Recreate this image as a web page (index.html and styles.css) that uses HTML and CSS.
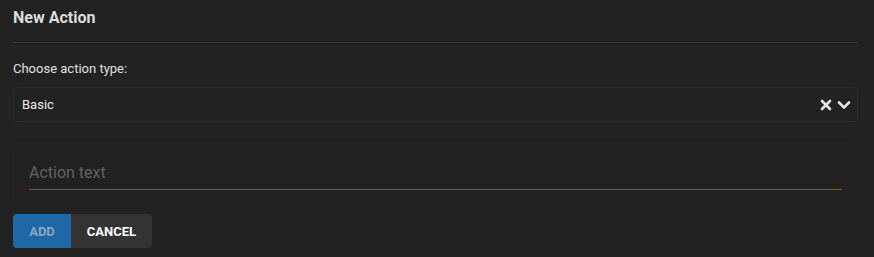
FILE: index.html
```html
<!DOCTYPE html>
<html>
<head>
<meta charset="utf-8">
<link rel="stylesheet" href="styles.css">
</head>
<body>
<div class="dialog">
  <div class="header"><h2 class="title">New Action</h2></div>
  <div class="field">
    <label class="label">Choose action type:</label>
    <div class="select">
      <span class="value">Basic</span>
      <span class="icons">
        <svg class="clear" width="12" height="12" viewBox="0 0 12 12"><path d="M2 2 L10 10 M10 2 L2 10" stroke="#e4e4e4" stroke-width="2.6" stroke-linecap="round"/></svg>
        <svg class="chev" width="14" height="10" viewBox="0 0 14 10"><path d="M2 2.5 L7 7.5 L12 2.5" fill="none" stroke="#e4e4e4" stroke-width="2.6" stroke-linecap="round" stroke-linejoin="round"/></svg>
      </span>
    </div>
  </div>
  <div class="panel">
    <input class="text-input" type="text" placeholder="Action text">
  </div>
  <div class="buttons">
    <button class="btn btn-add">ADD</button><button class="btn btn-cancel">CANCEL</button>
  </div>
</div>
</body>
</html>
```
FILE: styles.css
```css
html, body {
  margin: 0;
  padding: 0;
  background: #222222;
  font-family: Roboto, "Liberation Sans", Arial, sans-serif;
  color: #e0e0e0;
}
.dialog {
  padding: 0 16px 0 13px;
}
.header {
  height: 43px;
  border-bottom: 1px solid #363636;
  box-sizing: border-box;
  display: flex;
  align-items: flex-start;
}
.title {
  margin: 7px 0 0 0;
  font-size: 16px;
  font-weight: 700;
  line-height: 21px;
  color: #dcdcdc;
}
.field {
  padding-top: 17px;
}
.label {
  display: block;
  font-size: 13px;
  line-height: 18px;
  color: #e0e0e0;
  margin-bottom: 9px;
}
.select {
  height: 35px;
  box-sizing: border-box;
  border: 1px solid #2b2b2b;
  border-radius: 4px;
  display: flex;
  align-items: center;
  justify-content: space-between;
  padding: 0 6px 0 8px;
}
.value {
  font-size: 13px;
  color: #ececec;
}
.icons {
  display: flex;
  align-items: center;
  gap: 5px;
}
.panel {
  margin-top: 21px;
  height: 62px;
  box-sizing: border-box;
  border: 1px solid #242424;
  border-radius: 4px;
  background: #212121;
  padding: 14px 15px 0 15px;
}
.text-input {
  width: 100%;
  box-sizing: border-box;
  background: transparent;
  border: none;
  border-bottom: 1px solid #cc3322;
  outline: none;
  font-family: Roboto, "Liberation Sans", Arial, sans-serif;
  font-size: 16px;
  color: #ddd;
  padding: 2px 0 5px 0;
  height: 32px;
}
.text-input::placeholder {
  color: #626262;
}
.buttons {
  margin-top: 9px;
  display: flex;
}
.btn {
  height: 34px;
  border: none;
  font-family: Roboto, "Liberation Sans", Arial, sans-serif;
  font-size: 13px;
  font-weight: 700;
  padding: 0;
  cursor: pointer;
}
.btn-add {
  width: 58px;
  background: #1f68a6;
  color: #8ea6bd;
  border-radius: 4px 0 0 4px;
}
.btn-cancel {
  width: 81px;
  background: #333333;
  color: #ffffff;
  border-radius: 0 4px 4px 0;
}
```
